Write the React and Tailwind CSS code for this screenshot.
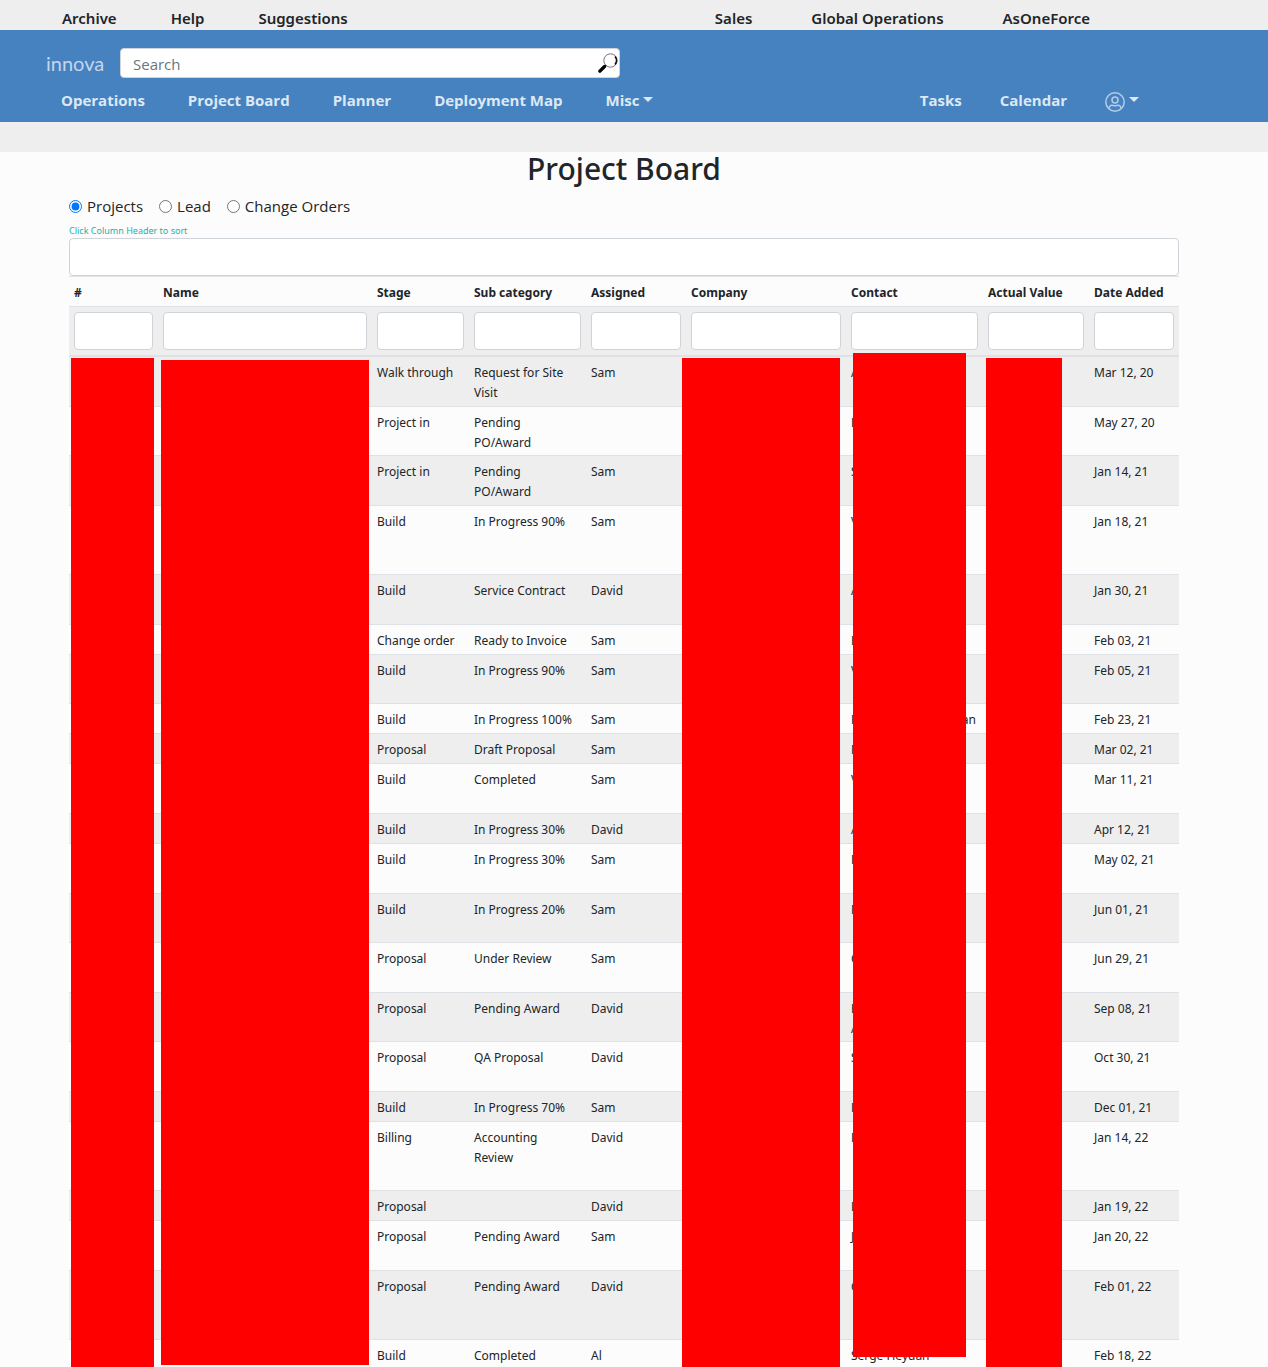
import React from "react";

const columns = [
  { label: "#", width: "w-[89px]" },
  { label: "Name", width: "w-[214px]" },
  { label: "Stage", width: "w-[97px]" },
  { label: "Sub category", width: "w-[117px]" },
  { label: "Assigned", width: "w-[100px]" },
  { label: "Company", width: "w-[160px]" },
  { label: "Contact", width: "w-[137px]" },
  { label: "Actual Value", width: "w-[106px]" },
  { label: "Date Added", width: "w-[90px]" },
];

const S = "h-[30px]";
const M = "h-[49px]";
const L = "h-[50px]";
const X = "h-[69px]";

// height, stage, sub category, assigned, contact, date added
const rows = [
  [M, "Walk through", "Request for Site Visit", "Sam", "A", "Mar 12, 20"],
  [M, "Project in", "Pending PO/Award", "", "E", "May 27, 20"],
  [L, "Project in", "Pending PO/Award", "Sam", "S", "Jan 14, 21"],
  [X, "Build", "In Progress 90%", "Sam", "V", "Jan 18, 21"],
  [L, "Build", "Service Contract", "David", "A", "Jan 30, 21"],
  [S, "Change order", "Ready to Invoice", "Sam", "E", "Feb 03, 21"],
  [M, "Build", "In Progress 90%", "Sam", "V", "Feb 05, 21"],
  [S, "Build", "In Progress 100%", "Sam", "E|an", "Feb 23, 21"],
  [S, "Proposal", "Draft Proposal", "Sam", "E", "Mar 02, 21"],
  [L, "Build", "Completed", "Sam", "V", "Mar 11, 21"],
  [S, "Build", "In Progress 30%", "David", "A", "Apr 12, 21"],
  [L, "Build", "In Progress 30%", "Sam", "E", "May 02, 21"],
  [M, "Build", "In Progress 20%", "Sam", "E", "Jun 01, 21"],
  [L, "Proposal", "Under Review", "Sam", "C", "Jun 29, 21"],
  [M, "Proposal", "Pending Award", "David", "E A", "Sep 08, 21"],
  [L, "Proposal", "QA Proposal", "David", "S", "Oct 30, 21"],
  [S, "Build", "In Progress 70%", "Sam", "E", "Dec 01, 21"],
  [X, "Billing", "Accounting Review", "David", "E", "Jan 14, 22"],
  [S, "Proposal", "", "David", "E", "Jan 19, 22"],
  [L, "Proposal", "Pending Award", "Sam", "J", "Jan 20, 22"],
  [X, "Proposal", "Pending Award", "David", "C", "Feb 01, 22"],
  ["h-[28px]", "Build", "Completed", "Al", "Serge Heydan", "Feb 18, 22"],
];

const redactions = [
  "left-[2px] w-[83px] top-[82px] bottom-0",
  "left-[92px] w-[208px] top-[84px] bottom-[3px]",
  "left-[613px] w-[158px] top-[82px] bottom-0",
  "left-[784px] w-[113px] top-[77px] bottom-[11px]",
  "left-[917px] w-[76px] top-[82px] bottom-0",
];

function Caret() {
  return (
    <svg className="mb-[2px] ml-1 h-[5px] w-[10px]" viewBox="0 0 10 5" fill="currentColor" aria-hidden="true">
      <path d="M0 0h10L5 5z" />
    </svg>
  );
}

function SearchIcon() {
  return (
    <svg className="h-5 w-5" viewBox="0 0 20 20" fill="none" aria-hidden="true">
      <circle cx="12.5" cy="7.5" r="6.7" stroke="#666" strokeWidth="0.9" />
      <path d="M17 3.6a6 6 0 0 1 0 7.8" stroke="#111" strokeWidth="1.6" />
      <path d="M7.8 12.2L6.6 13.4" stroke="#333" strokeWidth="1.4" />
      <path d="M6.5 13.5L1.9 18.1" stroke="#000" strokeWidth="3.4" strokeLinecap="round" />
    </svg>
  );
}

function UserIcon() {
  return (
    <svg className="h-5 w-5" viewBox="0 0 20 20" fill="none" stroke="currentColor" strokeWidth="1.5" aria-hidden="true">
      <circle cx="10" cy="10" r="9.2" />
      <circle cx="10" cy="8" r="3" />
      <path d="M4.2 16.6c-.4-2 1-3.4 2.8-3.4 1 0 1.7.5 3 .5s2-.5 3-.5c1.8 0 3.2 1.4 2.8 3.4" />
    </svg>
  );
}

function Contact({ text }) {
  if (text.includes("|")) {
    const [first, last] = text.split("|");
    return (
      <span className="flex justify-between pr-[2px]">
        <span>{first}</span>
        <span>{last}</span>
      </span>
    );
  }
  if (text === "E A") {
    return (
      <>
        E<br />A
      </>
    );
  }
  return text;
}

const field = "block w-full rounded border border-[#ced4da] bg-white px-3 outline-none";

export default function App() {
  return (
    <div className="min-h-screen bg-[#fcfcfc] font-['Open_Sans','Noto_Sans',sans-serif] text-[#212529]">
      <nav className="flex h-[30px] items-center justify-between bg-[#eee] pt-[7px] pr-[178px] pl-[62px] font-['Noto_Sans',sans-serif] text-[15px] font-semibold">
        <div className="flex gap-[54px]">
          <a href="#archive">Archive</a>
          <a href="#help">Help</a>
          <a href="#suggestions">Suggestions</a>
        </div>
        <div className="flex gap-[59px]">
          <a href="#sales">Sales</a>
          <a href="#global">Global Operations</a>
          <a href="#force">AsOneForce</a>
        </div>
      </nav>

      <header className="h-[92px] bg-[#4682c0] pt-[18px]">
        <div className="flex items-center pl-[46px]">
          <a href="#home" className="w-[74px] font-['Lato',sans-serif] text-[20px] leading-7 text-[#c3d6ea]">
            innova
          </a>
          <form className="relative w-[500px]" role="search">
            <input
              aria-label="Search"
              placeholder="Search"
              className="block h-[30px] w-full rounded border border-[#ced4da] bg-white pt-[2px] pr-8 pl-3 text-[15px] outline-none placeholder:text-[#6c757d]"
            />
            <button type="button" aria-label="Run search" className="absolute top-[5px] right-[2px]">
              <SearchIcon />
            </button>
          </form>
        </div>
        <nav className="mt-[10px] flex items-center justify-between pr-[129px] pl-[61px] text-[15px] leading-6 font-bold text-[#dde8f4]">
          <div className="flex gap-[43px]">
            <a href="#operations">Operations</a>
            <a href="#board">Project Board</a>
            <a href="#planner">Planner</a>
            <a href="#map">Deployment Map</a>
            <button type="button" className="flex items-center">
              Misc
              <Caret />
            </button>
          </div>
          <div className="flex gap-[38px]">
            <a href="#tasks">Tasks</a>
            <a href="#calendar">Calendar</a>
            <button type="button" aria-label="Account" className="flex items-center">
              <span className="pt-[3px] text-[#b5cde6]">
                <UserIcon />
              </span>
              <Caret />
            </button>
          </div>
        </nav>
      </header>
      <div className="h-[30px] bg-[#eee]" />

      <main className="pr-5">
        <div className="mx-auto max-w-[1140px] px-[15px]">
          <h1 className="text-center font-['Noto_Sans',sans-serif] text-[30px] leading-[34px] font-medium">Project Board</h1>
          <fieldset className="mt-2 flex gap-4 text-[15px] leading-6">
            <label className="flex items-center gap-[5px]">
              <input type="radio" name="kind" defaultChecked className="h-[13px] w-[13px]" />
              Projects
            </label>
            <label className="flex items-center gap-[5px]">
              <input type="radio" name="kind" className="h-[13px] w-[13px]" />
              Lead
            </label>
            <label className="flex items-center gap-[5px]">
              <input type="radio" name="kind" className="h-[13px] w-[13px]" />
              Change Orders
            </label>
          </fieldset>
          <p className="mt-[5px] font-['Noto_Sans',sans-serif] text-[9px] leading-[15px] text-[#20b2aa]">
            Click Column Header to sort
          </p>
          <input aria-label="Filter all" className={field + " h-[38px]"} />

          <div className="relative">
            <table className="w-full table-fixed border-separate border-spacing-0 text-left font-['Noto_Sans',sans-serif] text-[12px] leading-5">
              <thead>
                <tr className="h-[30px]">
                  {columns.map((c) => (
                    <th
                      key={c.label}
                      scope="col"
                      className={c.width + " border-t border-[#dee2e6] px-[5px] pt-[2px] align-middle font-bold whitespace-nowrap"}
                    >
                      {c.label}
                    </th>
                  ))}
                </tr>
                <tr className="h-[51px] bg-[#eee]">
                  {columns.map((c) => (
                    <td key={c.label} className="border-t border-b-2 border-[#dee2e6] px-[5px] py-[5px]">
                      <input aria-label={"Filter " + c.label} className={field + " h-[38px]"} />
                    </td>
                  ))}
                </tr>
              </thead>
              <tbody className="[&_td]:pt-[6px] [&_td]:pb-[2px] [&_td]:pl-[5px] [&_td]:align-top [&_tr+tr_td]:border-t [&_tr+tr_td]:border-[#dee2e6]">
                {rows.map(([height, stage, sub, assigned, contact, date], i) => (
                  <tr key={i} className={height + " odd:bg-[#eee]"}>
                    <td />
                    <td />
                    <td className="whitespace-nowrap">{stage}</td>
                    <td className="pr-[10px]">{sub}</td>
                    <td>{assigned}</td>
                    <td />
                    <td className="pr-[5px]">
                      <Contact text={contact} />
                    </td>
                    <td />
                    <td className="whitespace-nowrap">{date}</td>
                  </tr>
                ))}
              </tbody>
            </table>
            {redactions.map((box) => (
              <div key={box} className={box + " absolute bg-[#ff0000]"} />
            ))}
          </div>
        </div>
      </main>
    </div>
  );
}
